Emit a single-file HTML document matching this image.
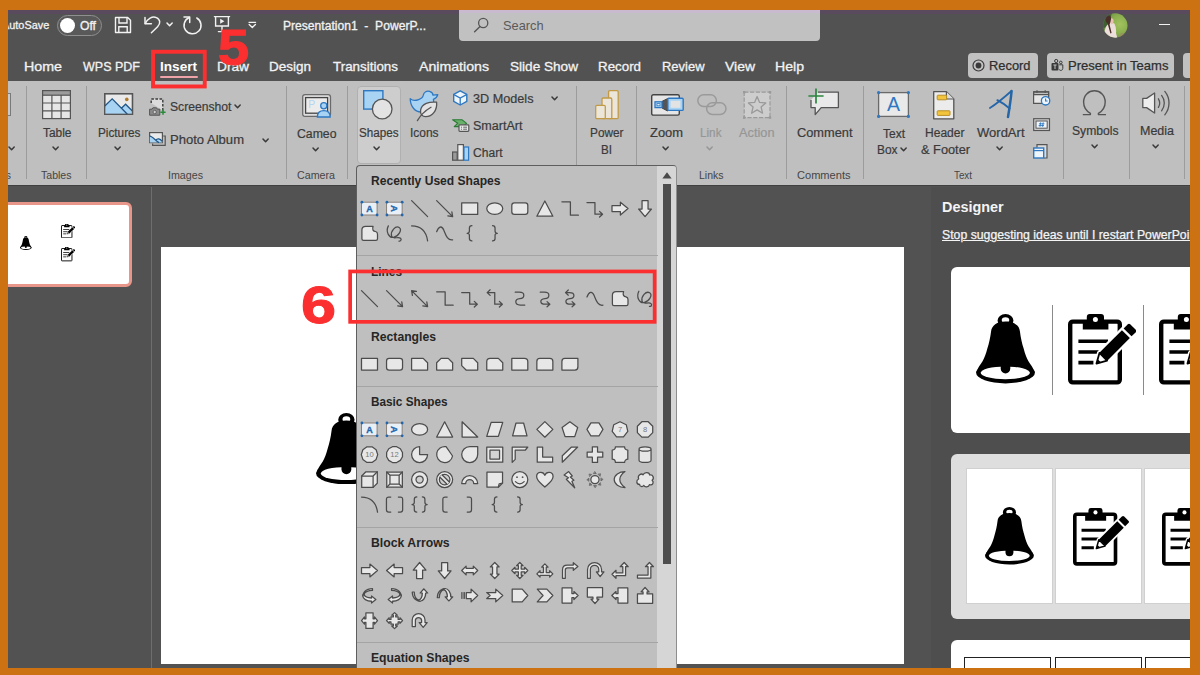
<!DOCTYPE html>
<html lang="en"><head><meta charset="utf-8"><title>PowerPoint - Insert Shapes</title>
<style>
html,body{margin:0;padding:0;}
body{width:1200px;height:675px;overflow:hidden;background:#cc7212;font-family:"Liberation Sans",sans-serif;}
#app{position:absolute;left:0;top:0;width:1200px;height:675px;overflow:hidden;background:#cc7212;}
#win{position:absolute;left:8px;top:10px;width:1182px;height:657.5px;overflow:hidden;background:#525252;}
#win>div,#win>span,#win>svg,#win div,#win span,#win svg{position:absolute;}
#win span{white-space:pre;}
#win svg{overflow:visible;}
#off{position:absolute;left:-8px;top:-10px;width:1200px;height:675px;}
</style></head><body><div id="app"><div id="win"><div id="off">
<!-- sec_title -->
<div style="left:8px;top:10px;width:1182px;height:71px;background:#525252;"></div>
<div style="left:8px;top:10px;width:1182px;height:3.7px;background:#594b5d;"></div>
<span style="left:2.10px;top:18.08px;font-size:11.5px;line-height:15.5px;color:#f2f2f2;letter-spacing:0.000px;transform:scaleX(0.9464);transform-origin:0 50%;-webkit-text-stroke:0.3px #f2f2f2;">AutoSave</span>
<div style="left:56.5px;top:15px;width:45.5px;height:20.5px;background:#595959;border:1px solid #8f8f8f;border-radius:11px;box-sizing:border-box;"></div>
<div style="left:59.5px;top:17.5px;width:15px;height:15px;background:#fff;border-radius:50%;"></div>
<span style="left:79.50px;top:17.84px;font-size:12px;line-height:16px;color:#f2f2f2;letter-spacing:0.000px;transform:scaleX(1.0136);transform-origin:0 50%;-webkit-text-stroke:0.3px #f2f2f2;">Off</span>
<svg style="left:113px;top:15px;" width="20" height="20" viewBox="0 0 20 20"><path d="M2.5 2.5h12.2l2.8 2.8v12.2h-15z" fill="none" stroke="#f2f2f2" stroke-width="1.4" stroke-linejoin="round"/>
<path d="M6 2.8v5.2h8v-5.2" fill="none" stroke="#f2f2f2" stroke-width="1.4"/><path d="M5.8 17.4v-5.6h8.4v5.6" fill="none" stroke="#f2f2f2" stroke-width="1.4"/></svg>
<svg style="left:140px;top:10px;" width="26" height="28" viewBox="0 0 26 28"><path d="M5 7.6v6.2h6.4" fill="none" stroke="#f2f2f2" stroke-width="1.5" stroke-linecap="round" stroke-linejoin="round"/>
<path d="M5.3 13.5 C7.4 8.6 12.4 5.8 16.4 7.6 C20.4 9.4 20.8 13.6 17.6 16.8 L11.4 22.8" fill="none" stroke="#f2f2f2" stroke-width="1.5" stroke-linecap="round"/></svg>
<svg style="left:164.8px;top:20.85px;" width="9.2" height="6.7" viewBox="0 0 9.2 6.7"><path d="M2 2 L4.6 4.7 L7.2 2" fill="none" stroke="#f2f2f2" stroke-width="1.5" stroke-linecap="round" stroke-linejoin="round"/></svg>
<svg style="left:180px;top:10px;" width="26" height="28" viewBox="0 0 26 28"><path d="M4 7 H9.7 V12.5" fill="none" stroke="#f2f2f2" stroke-width="1.5" stroke-linecap="round" stroke-linejoin="round"/>
<path d="M16.8 8 A8.5 8.5 0 1 1 9.3 7.5" fill="none" stroke="#f2f2f2" stroke-width="1.5" stroke-linecap="round"/></svg>
<svg style="left:212px;top:14px;" width="20" height="20" viewBox="0 0 20 20"><path d="M2.4 2.6h15.2M3.6 2.6v9.4h12.8v-9.4M10 12v5.4M6.4 17.6h7.2" fill="none" stroke="#f2f2f2" stroke-width="1.4" stroke-linecap="round"/>
<path d="M8.2 4.8l4.2 2.5-4.2 2.5z" fill="#f2f2f2"/></svg>
<svg style="left:246px;top:18px;" width="12" height="12" viewBox="0 0 12 12"><path d="M3 4.3h6.6" stroke="#f2f2f2" stroke-width="1.3" stroke-linecap="round"/><path d="M3.2 6.6l3.1 2.9 3.1-2.9" fill="none" stroke="#f2f2f2" stroke-width="1.4" stroke-linecap="round" stroke-linejoin="round"/></svg>
<span style="left:282.50px;top:17.84px;font-size:12px;line-height:16px;color:#f2f2f2;letter-spacing:0.000px;transform:scaleX(1.0081);transform-origin:0 50%;-webkit-text-stroke:0.3px #f2f2f2;">Presentation1  -  PowerP...</span>
<div style="left:459.4px;top:10px;width:360.4px;height:31px;background:#c1c1c1;border-radius:0 0 4px 4px;border-top:3.4px solid #c9bad0;box-sizing:border-box;"></div>
<svg style="left:472px;top:15px;" width="20" height="20" viewBox="0 0 20 20"><circle cx="11.2" cy="8" r="4.6" fill="none" stroke="#555" stroke-width="1.3"/><path d="M8 11.4L2.6 16.8" stroke="#555" stroke-width="1.4" stroke-linecap="round"/></svg>
<span style="left:502.50px;top:17.15px;font-size:13px;line-height:17px;color:#5a5a5a;letter-spacing:0.000px;transform:scaleX(0.9832);transform-origin:0 50%;">Search</span>
<svg style="left:1103px;top:13px;" width="24.6" height="25" viewBox="0 0 24.6 25"><defs><clipPath id="av"><circle cx="12.3" cy="12.5" r="12.2"/></clipPath><radialGradient id="avg" cx="0.68" cy="0.45" r="0.6"><stop offset="0" stop-color="#a3c25e"/><stop offset="0.6" stop-color="#8aae4e"/><stop offset="1" stop-color="#6f8f48"/></radialGradient></defs>
<g clip-path="url(#av)"><rect width="25" height="25" fill="url(#avg)"/><path d="M0 0 H9 L5 12 L0 16Z" fill="#3f6030"/>
<path d="M-1 26 L2.5 15 Q4.6 10.4 8.4 9.6 L11.4 10.6 Q13.6 15 13 20 L14.6 26Z" fill="#ecdfdb"/>
<path d="M7.6 5.4 Q10.8 5 10.6 8.6 Q10.4 11 8.6 11.4 L6.6 9.6Z" fill="#e6c3b3"/>
<path d="M2.4 6.2 Q2.6 2.4 6 2.6 Q8.4 3 8 6.2 Q7.4 9.6 6.6 11.6 L8.6 20 L7.4 20.4 L4.6 10.6 Q2.6 9.6 2.4 6.2Z" fill="#4a2f28"/>
<path d="M18 20 Q21 19 22 22 L20 25 L16 25Z" fill="#a08a68" opacity="0.7"/></g></svg>
<div style="left:1159px;top:23.5px;width:11px;height:1.5px;background:#f2f2f2;"></div>
<span style="left:24.00px;top:58.40px;font-size:13px;line-height:17px;color:#f2f2f2;letter-spacing:0.000px;transform:scaleX(1.0957);transform-origin:0 50%;-webkit-text-stroke:0.3px #f2f2f2;">Home</span>
<span style="left:82.50px;top:58.40px;font-size:13px;line-height:17px;color:#f2f2f2;letter-spacing:0.000px;transform:scaleX(0.9624);transform-origin:0 50%;-webkit-text-stroke:0.3px #f2f2f2;">WPS PDF</span>
<span style="left:216.50px;top:58.40px;font-size:13px;line-height:17px;color:#f2f2f2;letter-spacing:-0.000px;transform:scaleX(1.0548);transform-origin:0 50%;-webkit-text-stroke:0.3px #f2f2f2;">Draw</span>
<span style="left:268.50px;top:58.40px;font-size:13px;line-height:17px;color:#f2f2f2;letter-spacing:0.000px;transform:scaleX(1.0378);transform-origin:0 50%;-webkit-text-stroke:0.3px #f2f2f2;">Design</span>
<span style="left:332.50px;top:58.40px;font-size:13px;line-height:17px;color:#f2f2f2;letter-spacing:-0.000px;transform:scaleX(1.0301);transform-origin:0 50%;-webkit-text-stroke:0.3px #f2f2f2;">Transitions</span>
<span style="left:418.50px;top:58.40px;font-size:13px;line-height:17px;color:#f2f2f2;letter-spacing:0.000px;transform:scaleX(1.0884);transform-origin:0 50%;-webkit-text-stroke:0.3px #f2f2f2;">Animations</span>
<span style="left:509.50px;top:58.40px;font-size:13px;line-height:17px;color:#f2f2f2;letter-spacing:0.000px;transform:scaleX(1.0455);transform-origin:0 50%;-webkit-text-stroke:0.3px #f2f2f2;">Slide Show</span>
<span style="left:598.00px;top:58.40px;font-size:13px;line-height:17px;color:#f2f2f2;letter-spacing:-0.000px;transform:scaleX(1.0260);transform-origin:0 50%;-webkit-text-stroke:0.3px #f2f2f2;">Record</span>
<span style="left:661.50px;top:58.40px;font-size:13px;line-height:17px;color:#f2f2f2;letter-spacing:0.000px;transform:scaleX(0.9970);transform-origin:0 50%;-webkit-text-stroke:0.3px #f2f2f2;">Review</span>
<span style="left:724.50px;top:58.40px;font-size:13px;line-height:17px;color:#f2f2f2;letter-spacing:0.000px;transform:scaleX(1.0735);transform-origin:0 50%;-webkit-text-stroke:0.3px #f2f2f2;">View</span>
<span style="left:774.50px;top:58.40px;font-size:13px;line-height:17px;color:#f2f2f2;letter-spacing:0.000px;transform:scaleX(1.0846);transform-origin:0 50%;-webkit-text-stroke:0.3px #f2f2f2;">Help</span>
<span style="left:159.80px;top:58.40px;font-size:13px;line-height:17px;color:#ffffff;letter-spacing:0.000px;transform:scaleX(1.0480);transform-origin:0 50%;font-weight:700;">Insert</span>
<div style="left:160.2px;top:75.7px;width:37.4px;height:2.1px;background:#eea3a8;border-radius:1px;"></div>
<div style="left:968px;top:53px;width:69.6px;height:24.6px;background:#c1c1c1;border-radius:4px;"></div>
<svg style="left:972px;top:59px;" width="13" height="13" viewBox="0 0 13 13"><circle cx="6.5" cy="6.5" r="5.5" fill="none" stroke="#3a3a3a" stroke-width="1.2"/><circle cx="6.5" cy="6.5" r="2.9" fill="#3a3a3a"/></svg>
<span style="left:989.00px;top:57.15px;font-size:13px;line-height:17px;color:#2e2e2e;letter-spacing:0.000px;transform:scaleX(0.9902);transform-origin:0 50%;-webkit-text-stroke:0.25px #2e2e2e;">Record</span>
<div style="left:1047px;top:53px;width:127px;height:24.6px;background:#c1c1c1;border-radius:4px;"></div>
<svg style="left:1050px;top:58px;" width="15" height="15" viewBox="0 0 15 15"><rect x="1.5" y="5" width="7" height="7.5" rx="1" fill="#3a3a3a"/><path d="M3.4 7h3.2M5 7v4" stroke="#c1c1c1" stroke-width="1"/><circle cx="6.2" cy="3" r="1.6" fill="none" stroke="#3a3a3a" stroke-width="1"/><circle cx="10.8" cy="4.4" r="1.3" fill="none" stroke="#3a3a3a" stroke-width="1"/><path d="M9.2 6.8h3.6v3.6a2 2 0 0 1-3.6 1.2" fill="none" stroke="#3a3a3a" stroke-width="1"/></svg>
<span style="left:1068.00px;top:57.15px;font-size:13px;line-height:17px;color:#2e2e2e;letter-spacing:0.000px;transform:scaleX(1.0030);transform-origin:0 50%;-webkit-text-stroke:0.25px #2e2e2e;">Present in Teams</span>
<div style="left:1183px;top:53px;width:20px;height:24.6px;background:#c1c1c1;border-radius:4px;"></div>
<!-- sec_ribbon -->
<div style="left:8px;top:81px;width:1182px;height:103.5px;background:#bfbfbf;"></div>
<div style="left:8px;top:184.8px;width:1182px;height:1.7px;background:#404040;"></div>
<div style="left:357px;top:86px;width:43.5px;height:78px;background:#cdcdcd;border:1px solid #b0b0b0;border-radius:4px;box-sizing:border-box;"></div>
<div style="left:26px;top:86px;width:1px;height:93px;background:#9c9c9c;"></div>
<div style="left:86px;top:86px;width:1px;height:93px;background:#9c9c9c;"></div>
<div style="left:285.5px;top:86px;width:1px;height:93px;background:#9c9c9c;"></div>
<div style="left:346.5px;top:86px;width:1px;height:93px;background:#9c9c9c;"></div>
<div style="left:576px;top:86px;width:1px;height:93px;background:#9c9c9c;"></div>
<div style="left:635.5px;top:86px;width:1px;height:93px;background:#9c9c9c;"></div>
<div style="left:786px;top:86px;width:1px;height:93px;background:#9c9c9c;"></div>
<div style="left:862.5px;top:86px;width:1px;height:93px;background:#9c9c9c;"></div>
<div style="left:1062.5px;top:86px;width:1px;height:93px;background:#9c9c9c;"></div>
<div style="left:1128.5px;top:86px;width:1px;height:93px;background:#9c9c9c;"></div>
<div style="left:1184px;top:86px;width:1px;height:93px;background:#9c9c9c;"></div>
<div style="left:6px;top:93.2px;width:4.8px;height:22.6px;background:#c9c9c9;border:1px solid #7a7a7a;box-sizing:border-box;"></div>
<svg style="left:6.9px;top:145.05px;" width="9.2" height="6.7" viewBox="0 0 9.2 6.7"><path d="M2 2 L4.6 4.7 L7.2 2" fill="none" stroke="#3a3a3a" stroke-width="1.5" stroke-linecap="round" stroke-linejoin="round"/></svg>
<span style="left:5.50px;top:167.63px;font-size:11px;line-height:15px;color:#444;letter-spacing:0.000px;transform:scaleX(1.0000);transform-origin:0 50%;">s</span>
<span style="left:40.50px;top:167.83px;font-size:11px;line-height:15px;color:#454545;letter-spacing:0.000px;transform:scaleX(0.9593);transform-origin:0 50%;">Tables</span>
<span style="left:167.50px;top:167.83px;font-size:11px;line-height:15px;color:#454545;letter-spacing:0.000px;transform:scaleX(0.9703);transform-origin:0 50%;">Images</span>
<span style="left:297.00px;top:167.83px;font-size:11px;line-height:15px;color:#454545;letter-spacing:0.000px;transform:scaleX(0.9713);transform-origin:0 50%;">Camera</span>
<span style="left:698.50px;top:167.83px;font-size:11px;line-height:15px;color:#454545;letter-spacing:0.000px;transform:scaleX(0.9541);transform-origin:0 50%;">Links</span>
<span style="left:797.00px;top:167.83px;font-size:11px;line-height:15px;color:#454545;letter-spacing:0.000px;transform:scaleX(1.0060);transform-origin:0 50%;">Comments</span>
<span style="left:953.50px;top:167.83px;font-size:11px;line-height:15px;color:#454545;letter-spacing:0.000px;transform:scaleX(0.8922);transform-origin:0 50%;">Text</span>
<span style="left:42.50px;top:124.64px;font-size:12px;line-height:16px;color:#3a3a3a;letter-spacing:0.000px;transform:scaleX(0.9935);transform-origin:0 50%;-webkit-text-stroke:0.2px #3a3a3a;">Table</span>
<span style="left:97.50px;top:124.64px;font-size:12px;line-height:16px;color:#3a3a3a;letter-spacing:0.000px;transform:scaleX(0.9804);transform-origin:0 50%;-webkit-text-stroke:0.2px #3a3a3a;">Pictures</span>
<span style="left:296.50px;top:125.64px;font-size:12px;line-height:16px;color:#3a3a3a;letter-spacing:0.000px;transform:scaleX(1.0211);transform-origin:0 50%;-webkit-text-stroke:0.2px #3a3a3a;">Cameo</span>
<span style="left:358.50px;top:125.14px;font-size:12px;line-height:16px;color:#3a3a3a;letter-spacing:0.000px;transform:scaleX(0.9705);transform-origin:0 50%;-webkit-text-stroke:0.2px #3a3a3a;">Shapes</span>
<span style="left:410.00px;top:125.14px;font-size:12px;line-height:16px;color:#3a3a3a;letter-spacing:0.000px;transform:scaleX(0.9937);transform-origin:0 50%;-webkit-text-stroke:0.2px #3a3a3a;">Icons</span>
<span style="left:589.50px;top:125.14px;font-size:12px;line-height:16px;color:#3a3a3a;letter-spacing:0.000px;transform:scaleX(0.9849);transform-origin:0 50%;-webkit-text-stroke:0.2px #3a3a3a;">Power</span>
<span style="left:600.50px;top:141.64px;font-size:12px;line-height:16px;color:#3a3a3a;letter-spacing:0.000px;transform:scaleX(0.9702);transform-origin:0 50%;-webkit-text-stroke:0.2px #3a3a3a;">BI</span>
<span style="left:649.50px;top:125.14px;font-size:12px;line-height:16px;color:#3a3a3a;letter-spacing:0.000px;transform:scaleX(1.0758);transform-origin:0 50%;-webkit-text-stroke:0.2px #3a3a3a;">Zoom</span>
<span style="left:700.00px;top:125.14px;font-size:12px;line-height:16px;color:#969696;letter-spacing:0.000px;transform:scaleX(0.9767);transform-origin:0 50%;-webkit-text-stroke:0.2px #969696;">Link</span>
<span style="left:739.00px;top:125.14px;font-size:12px;line-height:16px;color:#969696;letter-spacing:0.000px;transform:scaleX(1.0644);transform-origin:0 50%;-webkit-text-stroke:0.2px #969696;">Action</span>
<span style="left:797.00px;top:125.14px;font-size:12px;line-height:16px;color:#3a3a3a;letter-spacing:0.000px;transform:scaleX(1.0670);transform-origin:0 50%;-webkit-text-stroke:0.2px #3a3a3a;">Comment</span>
<span style="left:882.50px;top:125.64px;font-size:12px;line-height:16px;color:#3a3a3a;letter-spacing:0.000px;transform:scaleX(0.9996);transform-origin:0 50%;-webkit-text-stroke:0.2px #3a3a3a;">Text</span>
<span style="left:877.00px;top:141.64px;font-size:12px;line-height:16px;color:#3a3a3a;letter-spacing:0.000px;transform:scaleX(0.9914);transform-origin:0 50%;-webkit-text-stroke:0.2px #3a3a3a;">Box</span>
<span style="left:925.00px;top:124.64px;font-size:12px;line-height:16px;color:#3a3a3a;letter-spacing:0.000px;transform:scaleX(1.0036);transform-origin:0 50%;-webkit-text-stroke:0.2px #3a3a3a;">Header</span>
<span style="left:920.50px;top:141.64px;font-size:12px;line-height:16px;color:#3a3a3a;letter-spacing:0.000px;transform:scaleX(1.0648);transform-origin:0 50%;-webkit-text-stroke:0.2px #3a3a3a;">&amp; Footer</span>
<span style="left:977.00px;top:124.64px;font-size:12px;line-height:16px;color:#3a3a3a;letter-spacing:0.000px;transform:scaleX(1.0848);transform-origin:0 50%;-webkit-text-stroke:0.2px #3a3a3a;">WordArt</span>
<span style="left:1072.00px;top:123.14px;font-size:12px;line-height:16px;color:#3a3a3a;letter-spacing:0.000px;transform:scaleX(1.0106);transform-origin:0 50%;-webkit-text-stroke:0.2px #3a3a3a;">Symbols</span>
<span style="left:1139.50px;top:123.14px;font-size:12px;line-height:16px;color:#3a3a3a;letter-spacing:0.000px;transform:scaleX(1.0403);transform-origin:0 50%;-webkit-text-stroke:0.2px #3a3a3a;">Media</span>
<span style="left:169.50px;top:98.64px;font-size:12px;line-height:16px;color:#3a3a3a;letter-spacing:0.000px;transform:scaleX(1.0131);transform-origin:0 50%;-webkit-text-stroke:0.2px #3a3a3a;">Screenshot</span>
<span style="left:169.50px;top:132.14px;font-size:12px;line-height:16px;color:#3a3a3a;letter-spacing:0.000px;transform:scaleX(1.0875);transform-origin:0 50%;-webkit-text-stroke:0.2px #3a3a3a;">Photo Album</span>
<span style="left:473.00px;top:90.64px;font-size:12px;line-height:16px;color:#3a3a3a;letter-spacing:0.000px;transform:scaleX(1.0548);transform-origin:0 50%;-webkit-text-stroke:0.2px #3a3a3a;">3D Models</span>
<span style="left:473.00px;top:118.14px;font-size:12px;line-height:16px;color:#3a3a3a;letter-spacing:0.000px;transform:scaleX(1.0457);transform-origin:0 50%;-webkit-text-stroke:0.2px #3a3a3a;">SmartArt</span>
<span style="left:473.00px;top:145.14px;font-size:12px;line-height:16px;color:#3a3a3a;letter-spacing:0.000px;transform:scaleX(1.0053);transform-origin:0 50%;-webkit-text-stroke:0.2px #3a3a3a;">Chart</span>
<svg style="left:51.4px;top:144.65px;" width="9.2" height="6.7" viewBox="0 0 9.2 6.7"><path d="M2 2 L4.6 4.7 L7.2 2" fill="none" stroke="#3a3a3a" stroke-width="1.5" stroke-linecap="round" stroke-linejoin="round"/></svg>
<svg style="left:113.4px;top:144.65px;" width="9.2" height="6.7" viewBox="0 0 9.2 6.7"><path d="M2 2 L4.6 4.7 L7.2 2" fill="none" stroke="#3a3a3a" stroke-width="1.5" stroke-linecap="round" stroke-linejoin="round"/></svg>
<svg style="left:232.9px;top:103.15px;" width="9.2" height="6.7" viewBox="0 0 9.2 6.7"><path d="M2 2 L4.6 4.7 L7.2 2" fill="none" stroke="#3a3a3a" stroke-width="1.5" stroke-linecap="round" stroke-linejoin="round"/></svg>
<svg style="left:260.9px;top:137.15px;" width="9.2" height="6.7" viewBox="0 0 9.2 6.7"><path d="M2 2 L4.6 4.7 L7.2 2" fill="none" stroke="#3a3a3a" stroke-width="1.5" stroke-linecap="round" stroke-linejoin="round"/></svg>
<svg style="left:311.4px;top:146.15px;" width="9.2" height="6.7" viewBox="0 0 9.2 6.7"><path d="M2 2 L4.6 4.7 L7.2 2" fill="none" stroke="#3a3a3a" stroke-width="1.5" stroke-linecap="round" stroke-linejoin="round"/></svg>
<svg style="left:372.4px;top:145.15px;" width="9.2" height="6.7" viewBox="0 0 9.2 6.7"><path d="M2 2 L4.6 4.7 L7.2 2" fill="none" stroke="#3a3a3a" stroke-width="1.5" stroke-linecap="round" stroke-linejoin="round"/></svg>
<svg style="left:550.4px;top:95.15px;" width="9.2" height="6.7" viewBox="0 0 9.2 6.7"><path d="M2 2 L4.6 4.7 L7.2 2" fill="none" stroke="#3a3a3a" stroke-width="1.5" stroke-linecap="round" stroke-linejoin="round"/></svg>
<svg style="left:660.9px;top:145.15px;" width="9.2" height="6.7" viewBox="0 0 9.2 6.7"><path d="M2 2 L4.6 4.7 L7.2 2" fill="none" stroke="#3a3a3a" stroke-width="1.5" stroke-linecap="round" stroke-linejoin="round"/></svg>
<svg style="left:705.4px;top:145.15px;" width="9.2" height="6.7" viewBox="0 0 9.2 6.7"><path d="M2 2 L4.6 4.7 L7.2 2" fill="none" stroke="#969696" stroke-width="1.5" stroke-linecap="round" stroke-linejoin="round"/></svg>
<svg style="left:899.4px;top:146.45px;" width="9.2" height="6.7" viewBox="0 0 9.2 6.7"><path d="M2 2 L4.6 4.7 L7.2 2" fill="none" stroke="#3a3a3a" stroke-width="1.5" stroke-linecap="round" stroke-linejoin="round"/></svg>
<svg style="left:995.4px;top:144.65px;" width="9.2" height="6.7" viewBox="0 0 9.2 6.7"><path d="M2 2 L4.6 4.7 L7.2 2" fill="none" stroke="#3a3a3a" stroke-width="1.5" stroke-linecap="round" stroke-linejoin="round"/></svg>
<svg style="left:1089.9px;top:143.15px;" width="9.2" height="6.7" viewBox="0 0 9.2 6.7"><path d="M2 2 L4.6 4.7 L7.2 2" fill="none" stroke="#3a3a3a" stroke-width="1.5" stroke-linecap="round" stroke-linejoin="round"/></svg>
<svg style="left:1151.4px;top:143.15px;" width="9.2" height="6.7" viewBox="0 0 9.2 6.7"><path d="M2 2 L4.6 4.7 L7.2 2" fill="none" stroke="#3a3a3a" stroke-width="1.5" stroke-linecap="round" stroke-linejoin="round"/></svg>
<svg style="left:42px;top:90.3px;" width="29" height="29.2" viewBox="0 0 29 29.2"><rect x="0.6" y="0.6" width="27.8" height="28" fill="#e6e6e6" stroke="#555" stroke-width="1.2"/><rect x="0.6" y="0.6" width="27.8" height="4.6" fill="#9c9c9c" stroke="#555" stroke-width="1.2"/><path d="M9.9 5v23.6M19.1 5v23.6M0.6 13h27.8M0.6 20.8h27.8" stroke="#555" stroke-width="1.2" fill="none"/></svg>
<svg style="left:104px;top:93.4px;" width="29.2" height="22" viewBox="0 0 29.2 22"><rect x="0.7" y="0.7" width="27.8" height="20.6" fill="#e9e9e9" stroke="#555" stroke-width="1.3"/><path d="M0.8 13 L8.2 5.8 L18.8 17.2 L23 21.2 H0.8Z" fill="#a9d3f3" stroke="none"/><path d="M17.2 15.4 L21.6 11.2 L28.4 18 V21.2 H23Z" fill="#a9d3f3" stroke="none"/><path d="M0.8 13 L8.2 5.8 L23.4 21.2 M17.4 15.2 L21.6 11.2 L28.4 18" fill="none" stroke="#1f5688" stroke-width="1.3"/><circle cx="22.8" cy="6.4" r="1.8" fill="#b07a2c"/><rect x="0.7" y="0.7" width="27.8" height="20.6" fill="none" stroke="#555" stroke-width="1.3"/></svg>
<svg style="left:149px;top:97.5px;" width="17" height="18" viewBox="0 0 17 18"><path d="M2.2 5V1h11.6v11.4" fill="#dcdcdc" stroke="#3c3c3c" stroke-width="1.4" stroke-dasharray="2.6 1.5"/><path d="M0.6 11.2h2.4l0.9-1.4h3.6l0.9 1.4h2.4v6H0.6z" fill="#8a8a8a" stroke="#555" stroke-width="1"/><circle cx="5.7" cy="14" r="1.7" fill="#cfcfcf" stroke="#555" stroke-width="0.8"/><path d="M14 11.6v5.2M11.4 14.2h5.2" stroke="#2a8a3a" stroke-width="1.5"/></svg>
<svg style="left:149px;top:132px;" width="17" height="14" viewBox="0 0 17 14"><path d="M3.6 11.4v2h12.6V4h-2" fill="none" stroke="#555" stroke-width="1.2"/><rect x="0.6" y="0.6" width="12.8" height="10" fill="#eaeaea" stroke="#555" stroke-width="1.2"/><path d="M0.8 4.4 C3 4.6 5.6 7.6 8 10.4 H0.8Z M6.6 8.6 C8.4 6.4 10.6 6.4 13.2 9 V10.4 H8Z" fill="#a9d3f3"/><path d="M0.8 4.2 C3.4 4.4 6.4 8.4 10 10.6 M6.4 8.4 C8.6 6 11 6.6 13.2 9.4" fill="none" stroke="#1f5688" stroke-width="1.3"/></svg>
<svg style="left:302.3px;top:93.5px;" width="29.4" height="23.6" viewBox="0 0 29.4 23.6"><rect x="0.7" y="0.7" width="27.8" height="21.6" rx="2.4" fill="#dedede" stroke="#6a6a6a" stroke-width="1.3"/><rect x="3.6" y="3.6" width="22" height="15.6" fill="#ececec" stroke="#444" stroke-width="1.3"/><text x="6.2" y="13.6" font-size="10.5" fill="#b5d5f0" font-family="Liberation Sans,sans-serif">P</text><path d="M15.4 23 C15.4 18.4 18 16.6 21.8 16.6 C25.6 16.6 28.2 18.4 28.2 23Z" fill="#a9d3f3" stroke="#2e78c2" stroke-width="1.3"/><circle cx="21.8" cy="11.8" r="3.1" fill="#a9d3f3" stroke="#2e78c2" stroke-width="1.3"/></svg>
<svg style="left:363px;top:90.3px;" width="30" height="30" viewBox="0 0 30 30"><rect x="0.7" y="0.7" width="19.2" height="18.4" fill="#a9d3f3" stroke="#2e78c2" stroke-width="1.4"/><circle cx="19.2" cy="19" r="9.8" fill="#e3e3e3" stroke="#555" stroke-width="1.3"/></svg>
<svg style="left:409.4px;top:89.6px;" width="30" height="32" viewBox="0 0 30 32"><path d="M1.2 8.6 C3 10.4 6.6 10.8 9.6 9.6 C12.6 8.6 13.8 7.4 14.2 5.4 C14.8 1.8 18 0.6 20.6 1.4 C23 2.2 24 4 24 5.2 L28.8 4.6 C28 7.4 26.4 8.6 24.4 9.4 C25.4 13.6 24.6 17.6 21.4 20.4 L13 22 C6.4 22.6 1.2 16.6 1.2 8.6Z" fill="#a9d3f3" stroke="#2e78c2" stroke-width="1.3" stroke-linejoin="round"/><path d="M27.6 12.2 C20.4 11.4 12.6 13.6 11.6 20.2 C11 24 13.4 26.6 16.6 26.6 C23.6 26.6 28.4 20 27.6 12.2Z" fill="#e3e3e3" stroke="#555" stroke-width="1.3" stroke-linejoin="round"/><path d="M8.4 30.6 C11.6 25 16.4 20.4 22 17.2" fill="none" stroke="#555" stroke-width="1.3" stroke-linecap="round"/></svg>
<svg style="left:453px;top:90px;" width="14.6" height="15.8" viewBox="0 0 14.6 15.8"><path d="M7.2 0.8 L13.8 4.4 V11.4 L7.2 15 L0.7 11.4 V4.4Z" fill="#eef5fb" stroke="#2e78c2" stroke-width="1.4" stroke-linejoin="round"/><path d="M0.9 4.6 L7.2 8 L13.6 4.6 M7.2 8 V14.8" fill="none" stroke="#2e78c2" stroke-width="1.3"/></svg>
<svg style="left:452.4px;top:118.6px;" width="17.4" height="13" viewBox="0 0 17.4 13"><path d="M0.6 0.8 H10.2 L14.6 4.4 L10.6 7.6 H2.2 L5.8 4.2Z" fill="#6ab06a" stroke="#2a7a36" stroke-width="1.1" stroke-linejoin="round"/><rect x="7" y="5.8" width="9.8" height="6.6" rx="0.8" fill="#e8e8e8" stroke="#555" stroke-width="1.2"/><path d="M9 8.2h1M11.2 8.2h3.8M9 10.2h1M11.2 10.2h3.8" stroke="#555" stroke-width="0.9"/></svg>
<svg style="left:452px;top:144.2px;" width="17.4" height="17" viewBox="0 0 17.4 17"><rect x="0.6" y="8" width="4.6" height="8.2" fill="#9a9a9a" stroke="#555" stroke-width="1.2"/><rect x="5.8" y="0.6" width="5.6" height="15.6" fill="#f2f2f2" stroke="#555" stroke-width="1.2"/><rect x="12" y="3" width="4.6" height="13.2" fill="#a9d3f3" stroke="#2e78c2" stroke-width="1.2"/></svg>
<svg style="left:594.6px;top:90px;" width="24.2" height="29.6" viewBox="0 0 24.2 29.6"><rect x="13.6" y="0.7" width="9.6" height="28" rx="1.2" fill="#ece6da" stroke="#c29a45" stroke-width="1.3"/><rect x="7" y="8" width="9.8" height="20.7" rx="1.2" fill="#ece6da" stroke="#c29a45" stroke-width="1.3"/><rect x="0.7" y="15.4" width="9.6" height="13.3" rx="1.2" fill="#ece6da" stroke="#c29a45" stroke-width="1.3"/></svg>
<svg style="left:650.6px;top:93.5px;" width="33" height="22" viewBox="0 0 33 22"><rect x="0.7" y="0.7" width="27.6" height="20.4" rx="1.6" fill="#e6e6e6" stroke="#444" stroke-width="1.4"/><path d="M11 7.4 L16.6 4.6 V17 L11 14Z" fill="#555" stroke="#444" stroke-width="1"/><rect x="4" y="7.8" width="7" height="5.8" fill="#a9d3f3" stroke="#2e78c2" stroke-width="1.3"/><rect x="6" y="9.6" width="3" height="2.2" fill="#e8f2fb" stroke="#2e78c2" stroke-width="0.8"/><rect x="16.8" y="4.2" width="15.4" height="12.2" rx="1" fill="#a9d3f3" stroke="#2e78c2" stroke-width="1.4"/><rect x="19.6" y="6.8" width="9.8" height="7" fill="#e3e3e3" stroke="none"/></svg>
<svg style="left:696.5px;top:94px;" width="30" height="21.4" viewBox="0 0 30 21.4"><rect x="0.8" y="0.8" width="18.6" height="11.6" rx="5.8" fill="none" stroke="#9a9a9a" stroke-width="1.5"/><rect x="9.6" y="8.8" width="19.4" height="11.6" rx="5.8" fill="none" stroke="#9a9a9a" stroke-width="1.5"/></svg>
<svg style="left:742.7px;top:91px;" width="28.4" height="28" viewBox="0 0 28.4 28"><rect x="1.2" y="1.2" width="25.8" height="25.4" fill="#cdcdcd" stroke="#9a9a9a" stroke-width="1.2" stroke-dasharray="4.2 1.6"/><rect x="0" y="0" width="2.4" height="2.4" fill="#9a9a9a"/><rect x="0" y="25.4" width="2.4" height="2.4" fill="#9a9a9a"/><rect x="25.8" y="0" width="2.4" height="2.4" fill="#9a9a9a"/><rect x="25.8" y="25.4" width="2.4" height="2.4" fill="#9a9a9a"/><path d="M14.1 5.6 L16.6 11.4 L22.8 11.9 L18.1 16 L19.6 22.2 L14.1 18.9 L8.6 22.2 L10.1 16 L5.4 11.9 L11.6 11.4Z" fill="none" stroke="#9a9a9a" stroke-width="1.3" stroke-linejoin="round"/></svg>
<svg style="left:808.2px;top:88.4px;" width="32" height="28" viewBox="0 0 32 28"><path d="M10 4.2 H30.4 V19.6 H13.2 L7.2 26.6 V19.6 H3 V12" fill="#e9e9e9" stroke="#555" stroke-width="1.3" stroke-linejoin="round"/><path d="M8 0.4 V15.6 M0.4 8 H15.6" stroke="#2e8540" stroke-width="1.7"/></svg>
<svg style="left:876.6px;top:90.6px;" width="33" height="27" viewBox="0 0 33 27"><rect x="1.6" y="1.6" width="29.8" height="23.8" fill="#e9e9e9" stroke="#6a6a6a" stroke-width="1.3"/><circle cx="1.6" cy="1.6" r="1.6" fill="#2e78c2"/><circle cx="1.6" cy="25.4" r="1.6" fill="#2e78c2"/><circle cx="31.4" cy="1.6" r="1.6" fill="#2e78c2"/><circle cx="31.4" cy="25.4" r="1.6" fill="#2e78c2"/><text x="16.5" y="20.4" font-size="19.5" text-anchor="middle" fill="#2e78c2" font-family="Liberation Sans,sans-serif">A</text></svg>
<svg style="left:933.2px;top:90.5px;" width="21.6" height="28.6" viewBox="0 0 21.6 28.6"><path d="M0.7 0.7 H13.4 L20.8 8 V27.8 H0.7Z" fill="#ececec" stroke="#555" stroke-width="1.3" stroke-linejoin="round"/><path d="M13.4 0.7 V8 H20.8" fill="#dcdcdc" stroke="#555" stroke-width="1.2" stroke-linejoin="round"/><rect x="4.2" y="4.2" width="9.4" height="4.6" rx="0.6" fill="#f2c43c" stroke="#b88f28" stroke-width="1"/><rect x="4.2" y="19.8" width="12.8" height="4.6" rx="0.6" fill="#f2c43c" stroke="#b88f28" stroke-width="1"/></svg>
<svg style="left:989.3px;top:90.3px;" width="24" height="28" viewBox="0 0 24 28"><path d="M22.6 1 C21.8 9 20.4 18.6 19 27" fill="none" stroke="#2466a8" stroke-width="2.5" stroke-linecap="round"/><path d="M22.4 1 C15 7.6 8 13.6 0.9 18" fill="none" stroke="#2466a8" stroke-width="1.7" stroke-linecap="round"/><path d="M8.4 10.2 C12.6 12.4 17 15.4 20.6 18.4" fill="none" stroke="#2466a8" stroke-width="2" stroke-linecap="round"/></svg>
<svg style="left:1033.2px;top:90.3px;" width="17.4" height="15.8" viewBox="0 0 17.4 15.8"><path d="M0.6 1.8 H15.6 V6.4 M8.6 13.4 H0.6 V1.8 M0.6 4.6 H15.6 M4 0.2 V3 M12.2 0.2 V3" fill="none" stroke="#555" stroke-width="1.2"/><rect x="0.6" y="4.6" width="15" height="8.8" fill="#e6e6e6" stroke="none"/><path d="M0.6 1.8 H15.6 V13.4 H0.6Z M0.6 4.6 H15.6" fill="none" stroke="#555" stroke-width="1.2"/><circle cx="12.6" cy="10.8" r="4.2" fill="#eef5fb" stroke="#2e78c2" stroke-width="1.3"/><path d="M12.6 8.6 V11 H14.6" fill="none" stroke="#2e78c2" stroke-width="1.1"/></svg>
<svg style="left:1033.2px;top:117.8px;" width="17.2" height="13.2" viewBox="0 0 17.2 13.2"><rect x="0.7" y="0.7" width="15.8" height="11.8" fill="#d6d6d6" stroke="#555" stroke-width="1.2"/><rect x="3" y="3" width="11.2" height="7.2" fill="#eef5fb" stroke="#555" stroke-width="1"/><path d="M7.6 4.4 L7 8.8 M10.2 4.4 L9.6 8.8 M6 5.8 H11.4 M5.6 7.6 H11" stroke="#2e78c2" stroke-width="0.9" fill="none"/></svg>
<svg style="left:1033.2px;top:144px;" width="15" height="16.4" viewBox="0 0 15 16.4"><path d="M4 3.4 V0.7 H14 V14 H11" fill="#dcdcdc" stroke="#555" stroke-width="1.2"/><rect x="0.7" y="4" width="10" height="10" fill="#eef5fb" stroke="#2e78c2" stroke-width="1.4"/><path d="M0.7 6.6 H10.7" stroke="#2e78c2" stroke-width="1.2"/></svg>
<svg style="left:1082.2px;top:90px;" width="25" height="25.6" viewBox="0 0 25 25.6"><path d="M0.8 24.6 H8.4 V23.4 C3.6 20.6 1.6 16.4 1.6 12 C1.6 5.4 6.4 0.8 12.4 0.8 C18.4 0.8 23.2 5.4 23.2 12 C23.2 16.4 21.2 20.6 16.4 23.4 V24.6 H24" fill="none" stroke="#555" stroke-width="1.4" stroke-linejoin="round"/></svg>
<svg style="left:1142.4px;top:89.8px;" width="28" height="26" viewBox="0 0 28 26"><path d="M0.8 8.4 H4.6 L12.6 3 V23 L4.6 17.6 H0.8Z" fill="#ededed" stroke="#555" stroke-width="1.3" stroke-linejoin="round"/><path d="M16.4 8.8 C18 11.4 18 14.8 16.4 17.4 M19.6 5.4 C23.2 10 23.2 16.2 19.6 20.8 M22.8 1.4 C28.4 8 28.4 18.2 22.8 24.8" fill="none" stroke="#555" stroke-width="1.3" stroke-linecap="round"/></svg>
<!-- sec_main -->
<div style="left:150.5px;top:187px;width:1px;height:481px;background:#6e6e6e;"></div>
<div style="left:-4px;top:202px;width:136px;height:85px;background:#fff;border:3px solid #e9968a;border-radius:6px;box-sizing:border-box;"></div>
<div style="left:161px;top:247px;width:743px;height:417px;background:#fff;"></div>
<svg style="left:316.4px;top:412.6px;overflow:hidden" width="61.4" height="71.8" viewBox="0 0 60 70" preserveAspectRatio="none"><path d="M29.7,7.4 C21,7.4 15.8,11.4 15.2,17.4 C14.4,24 13,30 11.5,34.4 C10,40 8.6,44 6.6,47.4 C4.6,50.6 1.6,54 0.3,58.8 L59.1,58.8 C57.8,54 54.8,50.6 52.8,47.4 C50.8,44 49.4,40 47.9,34.4 C46.4,30 45,24 44.2,17.4 C43.6,11.4 38.4,7.4 29.7,7.4Z" fill="#000"/><path fill-rule="evenodd" d="M21.7,6.6 A8,6.6 0 1 0 37.7,6.6 A8,6.6 0 1 0 21.7,6.6Z M25.9,6.1 A3.8,2.9 0 1 1 33.5,6.1 A3.8,2.9 0 1 1 25.9,6.1Z" fill="#000"/><ellipse cx="29.7" cy="58.9" rx="29.6" ry="10.7" fill="#000"/><ellipse cx="29.5" cy="59" rx="24.8" ry="6.4" fill="#fff"/><path d="M24.9,50 H34.5 V54.8 A4.8,4.8 0 0 1 24.9,54.8Z" fill="#000"/></svg>
<svg style="left:20px;top:236px;overflow:hidden" width="11.8" height="14" viewBox="0 0 60 70" preserveAspectRatio="none"><path d="M29.7,7.4 C21,7.4 15.8,11.4 15.2,17.4 C14.4,24 13,30 11.5,34.4 C10,40 8.6,44 6.6,47.4 C4.6,50.6 1.6,54 0.3,58.8 L59.1,58.8 C57.8,54 54.8,50.6 52.8,47.4 C50.8,44 49.4,40 47.9,34.4 C46.4,30 45,24 44.2,17.4 C43.6,11.4 38.4,7.4 29.7,7.4Z" fill="#000"/><path fill-rule="evenodd" d="M21.7,6.6 A8,6.6 0 1 0 37.7,6.6 A8,6.6 0 1 0 21.7,6.6Z M25.9,6.1 A3.8,2.9 0 1 1 33.5,6.1 A3.8,2.9 0 1 1 25.9,6.1Z" fill="#000"/><ellipse cx="29.7" cy="58.9" rx="29.6" ry="10.7" fill="#000"/><ellipse cx="29.5" cy="59" rx="24.8" ry="6.4" fill="#fff"/><path d="M24.9,50 H34.5 V54.8 A4.8,4.8 0 0 1 24.9,54.8Z" fill="#000"/></svg>
<svg style="left:60.6px;top:224px;overflow:hidden" width="14.4" height="14.4" viewBox="0 0 68 71" preserveAspectRatio="none"><rect x="2.2" y="7.6" width="49.6" height="60.8" rx="2.6" fill="#fff" stroke="#000" stroke-width="4.4"/><path d="M18.8,6.4 V3 Q18.8,0 21.8,0 H33 Q36,0 36,3 V6.4 H40.4 V15.6 H14.8 V6.4Z" fill="#000"/><circle cx="27.4" cy="5.4" r="2.5" fill="#fff"/><path d="M10.4,27.2 H40 M10.4,38 H32.4 M10.4,48.6 H25.4" stroke="#000" stroke-width="3.6" fill="none"/><g transform="translate(28.2 49.8) rotate(-45)"><path d="M-2.4,0 L9,-7.8 H49.4 Q54.4,-7.8 54.4,-2.8 V2.8 Q54.4,7.8 49.4,7.8 H9Z" fill="#fff"/><path d="M0.4,0 L10,-5.4 V5.4Z" fill="#fff" stroke="#000" stroke-width="1.8" stroke-linejoin="round"/><path d="M0.4,0 L4.4,-2.2 V2.2Z" fill="#000"/><path d="M10.4,-5.6 H42 V5.6 H10.4Z" fill="#000"/><path d="M44.4,-5.6 H50 Q52,-5.6 52,-3.6 V3.6 Q52,5.6 50,5.6 H44.4Z" fill="#000"/></g></svg>
<svg style="left:60.6px;top:247.2px;overflow:hidden" width="14.4" height="14.4" viewBox="0 0 68 71" preserveAspectRatio="none"><rect x="2.2" y="7.6" width="49.6" height="60.8" rx="2.6" fill="#fff" stroke="#000" stroke-width="4.4"/><path d="M18.8,6.4 V3 Q18.8,0 21.8,0 H33 Q36,0 36,3 V6.4 H40.4 V15.6 H14.8 V6.4Z" fill="#000"/><circle cx="27.4" cy="5.4" r="2.5" fill="#fff"/><path d="M10.4,27.2 H40 M10.4,38 H32.4 M10.4,48.6 H25.4" stroke="#000" stroke-width="3.6" fill="none"/><g transform="translate(28.2 49.8) rotate(-45)"><path d="M-2.4,0 L9,-7.8 H49.4 Q54.4,-7.8 54.4,-2.8 V2.8 Q54.4,7.8 49.4,7.8 H9Z" fill="#fff"/><path d="M0.4,0 L10,-5.4 V5.4Z" fill="#fff" stroke="#000" stroke-width="1.8" stroke-linejoin="round"/><path d="M0.4,0 L4.4,-2.2 V2.2Z" fill="#000"/><path d="M10.4,-5.6 H42 V5.6 H10.4Z" fill="#000"/><path d="M44.4,-5.6 H50 Q52,-5.6 52,-3.6 V3.6 Q52,5.6 50,5.6 H44.4Z" fill="#000"/></g></svg>
<!-- sec_designer -->
<div style="left:930.5px;top:187px;width:260px;height:481px;background:#4e4e4e;"></div>
<span style="left:941.90px;top:197.96px;font-size:14px;line-height:18px;color:#f4f4f4;letter-spacing:-0.000px;transform:scaleX(1.0281);transform-origin:0 50%;font-weight:700;">Designer</span>
<span style="left:941.90px;top:227.44px;font-size:12px;line-height:16px;color:#f4f4f4;letter-spacing:0.000px;transform:scaleX(1.0218);transform-origin:0 50%;-webkit-text-stroke:0.25px #f4f4f4;text-decoration:underline;text-underline-offset:0.6px;text-decoration-thickness:1px;">Stop suggesting ideas until I restart PowerPoint</span>
<div style="left:951px;top:267px;width:245px;height:166px;background:#fff;border-radius:6px;"></div>
<div style="left:1051.8px;top:305px;width:1px;height:89.5px;background:#8a8a8a;"></div>
<div style="left:1143px;top:305px;width:1px;height:89.5px;background:#8a8a8a;"></div>
<div style="left:951px;top:453.5px;width:245px;height:165.5px;background:#dedede;border-radius:6px;"></div>
<div style="left:967px;top:469px;width:85px;height:133.5px;background:#fff;box-shadow:0 0 0 1px #d0d0d0;"></div>
<div style="left:1056px;top:469px;width:84.5px;height:133.5px;background:#fff;box-shadow:0 0 0 1px #d0d0d0;"></div>
<div style="left:1144.5px;top:469px;width:60px;height:133.5px;background:#fff;box-shadow:0 0 0 1px #d0d0d0;"></div>
<div style="left:951px;top:639.5px;width:245px;height:40px;background:#fff;border-radius:6px;"></div>
<div style="left:964px;top:656.5px;width:87px;height:30px;background:#fff;border:1.8px solid #222;box-sizing:border-box;"></div>
<div style="left:1055px;top:656.5px;width:86.5px;height:30px;background:#fff;border:1.8px solid #222;box-sizing:border-box;"></div>
<div style="left:1145px;top:656.5px;width:60px;height:30px;background:#fff;border:1.8px solid #222;box-sizing:border-box;"></div>
<svg style="left:976.2px;top:314.4px;overflow:hidden" width="59.6" height="69.8" viewBox="0 0 60 70" preserveAspectRatio="none"><path d="M29.7,7.4 C21,7.4 15.8,11.4 15.2,17.4 C14.4,24 13,30 11.5,34.4 C10,40 8.6,44 6.6,47.4 C4.6,50.6 1.6,54 0.3,58.8 L59.1,58.8 C57.8,54 54.8,50.6 52.8,47.4 C50.8,44 49.4,40 47.9,34.4 C46.4,30 45,24 44.2,17.4 C43.6,11.4 38.4,7.4 29.7,7.4Z" fill="#000"/><path fill-rule="evenodd" d="M21.7,6.6 A8,6.6 0 1 0 37.7,6.6 A8,6.6 0 1 0 21.7,6.6Z M25.9,6.1 A3.8,2.9 0 1 1 33.5,6.1 A3.8,2.9 0 1 1 25.9,6.1Z" fill="#000"/><ellipse cx="29.7" cy="58.9" rx="29.6" ry="10.7" fill="#000"/><ellipse cx="29.5" cy="59" rx="24.8" ry="6.4" fill="#fff"/><path d="M24.9,50 H34.5 V54.8 A4.8,4.8 0 0 1 24.9,54.8Z" fill="#000"/></svg>
<svg style="left:1067.6px;top:314.4px;overflow:hidden" width="68" height="71" viewBox="0 0 68 71" preserveAspectRatio="none"><rect x="2.2" y="7.6" width="49.6" height="60.8" rx="2.6" fill="#fff" stroke="#000" stroke-width="4.4"/><path d="M18.8,6.4 V3 Q18.8,0 21.8,0 H33 Q36,0 36,3 V6.4 H40.4 V15.6 H14.8 V6.4Z" fill="#000"/><circle cx="27.4" cy="5.4" r="2.5" fill="#fff"/><path d="M10.4,27.2 H40 M10.4,38 H32.4 M10.4,48.6 H25.4" stroke="#000" stroke-width="3.6" fill="none"/><g transform="translate(28.2 49.8) rotate(-45)"><path d="M-2.4,0 L9,-7.8 H49.4 Q54.4,-7.8 54.4,-2.8 V2.8 Q54.4,7.8 49.4,7.8 H9Z" fill="#fff"/><path d="M0.4,0 L10,-5.4 V5.4Z" fill="#fff" stroke="#000" stroke-width="1.8" stroke-linejoin="round"/><path d="M0.4,0 L4.4,-2.2 V2.2Z" fill="#000"/><path d="M10.4,-5.6 H42 V5.6 H10.4Z" fill="#000"/><path d="M44.4,-5.6 H50 Q52,-5.6 52,-3.6 V3.6 Q52,5.6 50,5.6 H44.4Z" fill="#000"/></g></svg>
<svg style="left:1158.8px;top:314.4px;overflow:hidden" width="68" height="71" viewBox="0 0 68 71" preserveAspectRatio="none"><rect x="2.2" y="7.6" width="49.6" height="60.8" rx="2.6" fill="#fff" stroke="#000" stroke-width="4.4"/><path d="M18.8,6.4 V3 Q18.8,0 21.8,0 H33 Q36,0 36,3 V6.4 H40.4 V15.6 H14.8 V6.4Z" fill="#000"/><circle cx="27.4" cy="5.4" r="2.5" fill="#fff"/><path d="M10.4,27.2 H40 M10.4,38 H32.4 M10.4,48.6 H25.4" stroke="#000" stroke-width="3.6" fill="none"/><g transform="translate(28.2 49.8) rotate(-45)"><path d="M-2.4,0 L9,-7.8 H49.4 Q54.4,-7.8 54.4,-2.8 V2.8 Q54.4,7.8 49.4,7.8 H9Z" fill="#fff"/><path d="M0.4,0 L10,-5.4 V5.4Z" fill="#fff" stroke="#000" stroke-width="1.8" stroke-linejoin="round"/><path d="M0.4,0 L4.4,-2.2 V2.2Z" fill="#000"/><path d="M10.4,-5.6 H42 V5.6 H10.4Z" fill="#000"/><path d="M44.4,-5.6 H50 Q52,-5.6 52,-3.6 V3.6 Q52,5.6 50,5.6 H44.4Z" fill="#000"/></g></svg>
<svg style="left:985px;top:507.2px;overflow:hidden" width="49.4" height="57.8" viewBox="0 0 60 70" preserveAspectRatio="none"><path d="M29.7,7.4 C21,7.4 15.8,11.4 15.2,17.4 C14.4,24 13,30 11.5,34.4 C10,40 8.6,44 6.6,47.4 C4.6,50.6 1.6,54 0.3,58.8 L59.1,58.8 C57.8,54 54.8,50.6 52.8,47.4 C50.8,44 49.4,40 47.9,34.4 C46.4,30 45,24 44.2,17.4 C43.6,11.4 38.4,7.4 29.7,7.4Z" fill="#000"/><path fill-rule="evenodd" d="M21.7,6.6 A8,6.6 0 1 0 37.7,6.6 A8,6.6 0 1 0 21.7,6.6Z M25.9,6.1 A3.8,2.9 0 1 1 33.5,6.1 A3.8,2.9 0 1 1 25.9,6.1Z" fill="#000"/><ellipse cx="29.7" cy="58.9" rx="29.6" ry="10.7" fill="#000"/><ellipse cx="29.5" cy="59" rx="24.8" ry="6.4" fill="#fff"/><path d="M24.9,50 H34.5 V54.8 A4.8,4.8 0 0 1 24.9,54.8Z" fill="#000"/></svg>
<svg style="left:1073px;top:507.6px;overflow:hidden" width="55.8" height="58" viewBox="0 0 68 71" preserveAspectRatio="none"><rect x="2.2" y="7.6" width="49.6" height="60.8" rx="2.6" fill="#fff" stroke="#000" stroke-width="4.4"/><path d="M18.8,6.4 V3 Q18.8,0 21.8,0 H33 Q36,0 36,3 V6.4 H40.4 V15.6 H14.8 V6.4Z" fill="#000"/><circle cx="27.4" cy="5.4" r="2.5" fill="#fff"/><path d="M10.4,27.2 H40 M10.4,38 H32.4 M10.4,48.6 H25.4" stroke="#000" stroke-width="3.6" fill="none"/><g transform="translate(28.2 49.8) rotate(-45)"><path d="M-2.4,0 L9,-7.8 H49.4 Q54.4,-7.8 54.4,-2.8 V2.8 Q54.4,7.8 49.4,7.8 H9Z" fill="#fff"/><path d="M0.4,0 L10,-5.4 V5.4Z" fill="#fff" stroke="#000" stroke-width="1.8" stroke-linejoin="round"/><path d="M0.4,0 L4.4,-2.2 V2.2Z" fill="#000"/><path d="M10.4,-5.6 H42 V5.6 H10.4Z" fill="#000"/><path d="M44.4,-5.6 H50 Q52,-5.6 52,-3.6 V3.6 Q52,5.6 50,5.6 H44.4Z" fill="#000"/></g></svg>
<svg style="left:1162px;top:507.6px;overflow:hidden" width="55.8" height="58" viewBox="0 0 68 71" preserveAspectRatio="none"><rect x="2.2" y="7.6" width="49.6" height="60.8" rx="2.6" fill="#fff" stroke="#000" stroke-width="4.4"/><path d="M18.8,6.4 V3 Q18.8,0 21.8,0 H33 Q36,0 36,3 V6.4 H40.4 V15.6 H14.8 V6.4Z" fill="#000"/><circle cx="27.4" cy="5.4" r="2.5" fill="#fff"/><path d="M10.4,27.2 H40 M10.4,38 H32.4 M10.4,48.6 H25.4" stroke="#000" stroke-width="3.6" fill="none"/><g transform="translate(28.2 49.8) rotate(-45)"><path d="M-2.4,0 L9,-7.8 H49.4 Q54.4,-7.8 54.4,-2.8 V2.8 Q54.4,7.8 49.4,7.8 H9Z" fill="#fff"/><path d="M0.4,0 L10,-5.4 V5.4Z" fill="#fff" stroke="#000" stroke-width="1.8" stroke-linejoin="round"/><path d="M0.4,0 L4.4,-2.2 V2.2Z" fill="#000"/><path d="M10.4,-5.6 H42 V5.6 H10.4Z" fill="#000"/><path d="M44.4,-5.6 H50 Q52,-5.6 52,-3.6 V3.6 Q52,5.6 50,5.6 H44.4Z" fill="#000"/></g></svg>
<!-- sec_gallery -->
<div style="left:356.2px;top:164.8px;width:320.8px;height:510px;background:#bfbfbf;border:1px solid #5e5e5e;border-right-color:#8e8e8e;border-radius:4px 4px 0 0;box-sizing:border-box;"></div>
<div style="left:657px;top:165.8px;width:19px;height:505px;background:#d6d6d6;border-radius:0 3px 0 0;"></div>
<svg style="left:660.7px;top:170.6px;" width="12" height="8" viewBox="0 0 12 8"><path d="M1.4 7.4 L6 1.2 L10.6 7.4Z" fill="#4a4a4a"/></svg>
<div style="left:662.8px;top:184px;width:8px;height:379.5px;background:#4e4e4e;"></div>
<span style="left:370.50px;top:173.44px;font-size:12px;line-height:16px;color:#262626;letter-spacing:0.000px;transform:scaleX(1.0061);transform-origin:0 50%;font-weight:700;">Recently Used Shapes</span>
<span style="left:370.50px;top:264.04px;font-size:12px;line-height:16px;color:#262626;letter-spacing:0.000px;transform:scaleX(0.9891);transform-origin:0 50%;font-weight:700;">Lines</span>
<span style="left:370.50px;top:329.14px;font-size:12px;line-height:16px;color:#262626;letter-spacing:0.000px;transform:scaleX(1.0152);transform-origin:0 50%;font-weight:700;">Rectangles</span>
<span style="left:370.50px;top:394.44px;font-size:12px;line-height:16px;color:#262626;letter-spacing:0.000px;transform:scaleX(0.9803);transform-origin:0 50%;font-weight:700;">Basic Shapes</span>
<span style="left:370.50px;top:534.64px;font-size:12px;line-height:16px;color:#262626;letter-spacing:0.000px;transform:scaleX(1.0207);transform-origin:0 50%;font-weight:700;">Block Arrows</span>
<span style="left:370.50px;top:650.14px;font-size:12px;line-height:16px;color:#262626;letter-spacing:0.000px;transform:scaleX(1.0118);transform-origin:0 50%;font-weight:700;">Equation Shapes</span>
<div style="left:357px;top:255px;width:300.5px;height:1px;background:#a4a4a4;"></div>
<div style="left:357px;top:386px;width:300.5px;height:1px;background:#a4a4a4;"></div>
<div style="left:357px;top:526.5px;width:300.5px;height:1px;background:#a4a4a4;"></div>
<div style="left:357px;top:641.5px;width:300.5px;height:1px;background:#a4a4a4;"></div>
<svg style="left:0;top:0" width="1200" height="675" viewBox="0 0 1200 675"><g stroke="#4c4c4c" stroke-width="1.25" stroke-linejoin="round" stroke-linecap="round"><g transform="translate(369.50 208.6)"><rect x="-7.6" y="-6.4" width="15.2" height="12.8" fill="#e9eff6" stroke="#8a8078" stroke-width="1"/><text x="0" y="3.2" font-size="9" font-weight="bold" text-anchor="middle" fill="#2266ae" stroke="#2266ae" stroke-width="0.35" font-family="Liberation Sans,sans-serif" transform="rotate(0)">A</text><circle cx="-7.6" cy="-6.4" r="1.4" fill="#2266ae" stroke="none"/><circle cx="-7.6" cy="6.4" r="1.4" fill="#2266ae" stroke="none"/><circle cx="7.6" cy="-6.4" r="1.4" fill="#2266ae" stroke="none"/><circle cx="7.6" cy="6.4" r="1.4" fill="#2266ae" stroke="none"/></g><g transform="translate(394.55 208.6)"><rect x="-7.6" y="-6.4" width="15.2" height="12.8" fill="#e9eff6" stroke="#8a8078" stroke-width="1"/><text x="0" y="3.2" font-size="9" font-weight="bold" text-anchor="middle" fill="#2266ae" stroke="#2266ae" stroke-width="0.35" font-family="Liberation Sans,sans-serif" transform="rotate(90)">A</text><circle cx="-7.6" cy="-6.4" r="1.4" fill="#2266ae" stroke="none"/><circle cx="-7.6" cy="6.4" r="1.4" fill="#2266ae" stroke="none"/><circle cx="7.6" cy="-6.4" r="1.4" fill="#2266ae" stroke="none"/><circle cx="7.6" cy="6.4" r="1.4" fill="#2266ae" stroke="none"/></g><g transform="translate(419.60 208.6)"><path d="M-8,-8 L8,8" fill="none" /></g><g transform="translate(444.65 208.6)"><path d="M-8,-8 L8,8 M3.2,7.2 L8,8 L7.2,3.2" fill="none" /></g><g transform="translate(469.70 208.6)"><path d="M-8,-5.8H8V5.8H-8Z" fill="#e7e7e7" /></g><g transform="translate(494.75 208.6)"><ellipse cx="0" cy="0" rx="8" ry="5.8" fill="#e7e7e7"/></g><g transform="translate(519.80 208.6)"><rect x="-8" y="-5.8" width="16" height="11.6" rx="2.6" fill="#e7e7e7"/></g><g transform="translate(544.85 208.6)"><path d="M0,-7.6 L8,7.6 H-8Z" fill="#e7e7e7" /></g><g transform="translate(569.90 208.6)"><path d="M-8,-6.8 H0.5 V6.6 H8.5" fill="none" /></g><g transform="translate(594.95 208.6)"><path d="M-8,-6 H0 V5.6 H7.4 M4.6,2.8 L7.6,5.6 L4.6,8.4" fill="none" /></g><g transform="translate(620.00 208.6)"><path d="M-8,-3 H0.4 V-6.4 L8,0 L0.4,6.4 V3 H-8Z" fill="#e7e7e7" /></g><g transform="translate(645.05 208.6)"><path d="M-3,-8 H3 V0.4 H6.4 L0,8 L-6.4,0.4 H-3Z" fill="#e7e7e7" /></g><g transform="translate(369.50 233.3)"><path d="M-7.6,5.4 V-3.4 Q-7.6,-7 -3.8,-7 H3.6 C2.4,-3.6 3.8,-2 6,-1.8 Q8,-1.4 8,1 V5.4 Q8,7 6.4,7 H-6 Q-7.6,7 -7.6,5.4Z" fill="#e7e7e7" /></g><g transform="translate(394.55 233.3)"><path d="M-6.2,-7.4 C-9.2,-1.5 -5.5,4.8 -1,4 C4,3 8,-3.5 4.6,-5.8 C1,-8 -4.2,-2 -3,2.6 C-1.8,7 3.4,2.6 6,5 C7.6,6.6 5.6,8.2 4.4,7.8" fill="none" /></g><g transform="translate(419.60 233.3)"><path d="M-8,-7.4 Q6,-7.2 8,7.6" fill="none" /></g><g transform="translate(444.65 233.3)"><path d="M-8,-1.6 C-6,-6.6 -3,-8.4 -0.8,-3 C1.2,2 3,7.4 8,6.6" fill="none" /></g><g transform="translate(469.70 233.3)"><path d="M2.2,-7.6 Q-0.3,-7.6 -0.3,-5.2 V-2.2 Q-0.3,0 -2.6,0 Q-0.3,0 -0.3,2.2 V5.2 Q-0.3,7.6 2.2,7.6" fill="none" /></g><g transform="translate(494.75 233.3)"><path d="M-2.2,-7.6 Q0.3,-7.6 0.3,-5.2 V-2.2 Q0.3,0 2.6,0 Q0.3,0 0.3,2.2 V5.2 Q0.3,7.6 -2.2,7.6" fill="none" /></g><g transform="translate(369.50 298.6)"><path d="M-8,-8 L8,8" fill="none" /></g><g transform="translate(394.55 298.6)"><path d="M-8,-8 L8,8 M3.2,7.2 L8,8 L7.2,3.2" fill="none" /></g><g transform="translate(419.60 298.6)"><path d="M-8,-8 L8,8 M3.2,7.2 L8,8 L7.2,3.2 M-3.2,-7.2 L-8,-8 L-7.2,-3.2" fill="none" /></g><g transform="translate(444.65 298.6)"><path d="M-8,-6.8 H0.5 V6.6 H8.5" fill="none" /></g><g transform="translate(469.70 298.6)"><path d="M-8,-6 H0 V5.6 H7.4 M4.6,2.8 L7.6,5.6 L4.6,8.4" fill="none" /></g><g transform="translate(494.75 298.6)"><path d="M-7.4,-6 H0 V5.6 H7.4 M4.6,2.8 L7.6,5.6 L4.6,8.4 M-4.6,-8.8 L-7.6,-6 L-4.6,-3.2" fill="none" /></g><g transform="translate(519.80 298.6)"><path d="M-4.6,-6.4 H-0.5 Q4,-6.4 4,-3.4 Q4,-0.2 0,0 Q-4.2,0.4 -4,3.4 Q-3.8,6.4 0.4,6.4 H5" fill="none" /></g><g transform="translate(544.85 298.6)"><path d="M-4.6,-6.4 H-0.5 Q4,-6.4 4,-3.4 Q4,-0.2 0,0 Q-4.2,0.4 -4,3 Q-3.8,5.6 0.4,5.6 H4.6 M2.2,3 L5,5.6 L2.2,8.2" fill="none" /></g><g transform="translate(569.90 298.6)"><path d="M-3.6,-6 H-0.5 Q4,-6 4,-3.2 Q4,-0.2 0,0 Q-4.2,0.4 -4,3 Q-3.8,5.6 0.4,5.6 H4.6 M2.2,3 L5,5.6 L2.2,8.2 M-1.6,-8.6 L-4.4,-6 L-1.6,-3.4" fill="none" /></g><g transform="translate(594.95 298.6)"><path d="M-8,-1.6 C-6,-6.6 -3,-8.4 -0.8,-3 C1.2,2 3,7.4 8,6.6" fill="none" /></g><g transform="translate(620.00 298.6)"><path d="M-7.6,5.4 V-3.4 Q-7.6,-7 -3.8,-7 H3.6 C2.4,-3.6 3.8,-2 6,-1.8 Q8,-1.4 8,1 V5.4 Q8,7 6.4,7 H-6 Q-7.6,7 -7.6,5.4Z" fill="#e7e7e7" /></g><g transform="translate(645.05 298.6)"><path d="M-6.2,-7.4 C-9.2,-1.5 -5.5,4.8 -1,4 C4,3 8,-3.5 4.6,-5.8 C1,-8 -4.2,-2 -3,2.6 C-1.8,7 3.4,2.6 6,5 C7.6,6.6 5.6,8.2 4.4,7.8" fill="none" /></g><g transform="translate(369.50 364.2)"><path d="M-8,-5.8H8V5.8H-8Z" fill="#e7e7e7" /></g><g transform="translate(394.55 364.2)"><rect x="-8" y="-5.8" width="16" height="11.6" rx="2.6" fill="#e7e7e7"/></g><g transform="translate(419.60 364.2)"><path d="M-8,-5.8 H3.6 L8,-1.4 V5.8 H-8Z" fill="#e7e7e7" /></g><g transform="translate(444.65 364.2)"><path d="M-3.6,-5.8 H3.6 L8,-1.4 V5.8 H-8 V-1.4Z" fill="#e7e7e7" /></g><g transform="translate(469.70 364.2)"><path d="M-8,-5.8 H3.6 L8,-1.4 V5.8 H-3.6 L-8,1.4Z" fill="#e7e7e7" /></g><g transform="translate(494.75 364.2)"><path d="M-4.6,-5.8 H3.6 L8,-1.4 V5.8 H-8 V-2.4 Q-8,-5.8 -4.6,-5.8Z" fill="#e7e7e7" /></g><g transform="translate(519.80 364.2)"><path d="M-8,-5.8 H4.6 Q8,-5.8 8,-2.4 V5.8 H-8Z" fill="#e7e7e7" /></g><g transform="translate(544.85 364.2)"><path d="M-5,-5.8 H5 Q8,-5.8 8,-2.8 V5.8 H-8 V-2.8 Q-8,-5.8 -5,-5.8Z" fill="#e7e7e7" /></g><g transform="translate(569.90 364.2)"><path d="M-5,-5.8 H8 V2.8 Q8,5.8 5,5.8 H-8 V-2.8 Q-8,-5.8 -5,-5.8Z" fill="#e7e7e7" /></g><g transform="translate(369.50 429.4)"><rect x="-7.6" y="-6.4" width="15.2" height="12.8" fill="#e9eff6" stroke="#8a8078" stroke-width="1"/><text x="0" y="3.2" font-size="9" font-weight="bold" text-anchor="middle" fill="#2266ae" stroke="#2266ae" stroke-width="0.35" font-family="Liberation Sans,sans-serif" transform="rotate(0)">A</text><circle cx="-7.6" cy="-6.4" r="1.4" fill="#2266ae" stroke="none"/><circle cx="-7.6" cy="6.4" r="1.4" fill="#2266ae" stroke="none"/><circle cx="7.6" cy="-6.4" r="1.4" fill="#2266ae" stroke="none"/><circle cx="7.6" cy="6.4" r="1.4" fill="#2266ae" stroke="none"/></g><g transform="translate(394.55 429.4)"><rect x="-7.6" y="-6.4" width="15.2" height="12.8" fill="#e9eff6" stroke="#8a8078" stroke-width="1"/><text x="0" y="3.2" font-size="9" font-weight="bold" text-anchor="middle" fill="#2266ae" stroke="#2266ae" stroke-width="0.35" font-family="Liberation Sans,sans-serif" transform="rotate(90)">A</text><circle cx="-7.6" cy="-6.4" r="1.4" fill="#2266ae" stroke="none"/><circle cx="-7.6" cy="6.4" r="1.4" fill="#2266ae" stroke="none"/><circle cx="7.6" cy="-6.4" r="1.4" fill="#2266ae" stroke="none"/><circle cx="7.6" cy="6.4" r="1.4" fill="#2266ae" stroke="none"/></g><g transform="translate(419.60 429.4)"><ellipse cx="0" cy="0" rx="8" ry="5.8" fill="#e7e7e7"/></g><g transform="translate(444.65 429.4)"><path d="M0,-7.6 L8,7.6 H-8Z" fill="#e7e7e7" /></g><g transform="translate(469.70 429.4)"><path d="M-7.6,-7.6 L8,7.6 H-7.6Z" fill="#e7e7e7" /></g><g transform="translate(494.75 429.4)"><path d="M-3.6,-7 H8 L3.6,7 H-8Z" fill="#e7e7e7" /></g><g transform="translate(519.80 429.4)"><path d="M-3.8,-6.4 H3.8 L7.2,6.4 H-7.2Z" fill="#e7e7e7" /></g><g transform="translate(544.85 429.4)"><path d="M0,-7.8 L8,0 L0,7.8 L-8,0Z" fill="#e7e7e7" /></g><g transform="translate(569.90 429.4)"><path d="M0.00,-7.60 L7.80,-1.93 L4.82,7.23 L-4.82,7.23 L-7.80,-1.93Z" fill="#e7e7e7" /></g><g transform="translate(594.95 429.4)"><path d="M8.00,0.00 L4.00,6.58 L-4.00,6.58 L-8.00,0.00 L-4.00,-6.58 L4.00,-6.58Z" fill="#e7e7e7" /></g><g transform="translate(620.00 429.4)"><path d="M0.00,-7.70 L6.25,-4.69 L7.80,2.08 L3.47,7.51 L-3.47,7.51 L-7.80,2.08 L-6.25,-4.69Z" fill="#e7e7e7" /><text x="0" y="2.7" font-size="7.6" text-anchor="middle" fill="#7a7a7a" stroke="none" font-family="Liberation Sans,sans-serif">7</text></g><g transform="translate(645.05 429.4)"><path d="M7.67,3.18 L3.18,7.67 L-3.18,7.67 L-7.67,3.18 L-7.67,-3.18 L-3.18,-7.67 L3.18,-7.67 L7.67,-3.18Z" fill="#e7e7e7" /><text x="0" y="2.7" font-size="7.6" text-anchor="middle" fill="#7a7a7a" stroke="none" font-family="Liberation Sans,sans-serif">8</text></g><g transform="translate(369.50 454.6)"><path d="M8.20,0.00 L6.63,4.82 L2.53,7.80 L-2.53,7.80 L-6.63,4.82 L-8.20,0.00 L-6.63,-4.82 L-2.53,-7.80 L2.53,-7.80 L6.63,-4.82Z" fill="#e7e7e7" /><text x="0" y="2.7" font-size="7.6" text-anchor="middle" fill="#7a7a7a" stroke="none" font-family="Liberation Sans,sans-serif">10</text></g><g transform="translate(394.55 454.6)"><path d="M7.92,2.12 L5.80,5.80 L2.12,7.92 L-2.12,7.92 L-5.80,5.80 L-7.92,2.12 L-7.92,-2.12 L-5.80,-5.80 L-2.12,-7.92 L2.12,-7.92 L5.80,-5.80 L7.92,-2.12Z" fill="#e7e7e7" /><text x="0" y="2.7" font-size="7.6" text-anchor="middle" fill="#7a7a7a" stroke="none" font-family="Liberation Sans,sans-serif">12</text></g><g transform="translate(419.60 454.6)"><path d="M0,0 H8 A8,8 0 1 1 0,-8Z" fill="#e7e7e7" /></g><g transform="translate(444.65 454.6)"><path d="M1.4,-7.9 A8,8 0 1 0 7.9,1.4Z" fill="#e7e7e7" /></g><g transform="translate(469.70 454.6)"><path d="M8,-8 V0 A8,8 0 1 1 0,-8Z" fill="#e7e7e7" /></g><g transform="translate(494.75 454.6)"><path d="M-8,-7.6H8V7.6H-8Z" fill="#e7e7e7" /><path d="M-4.8,-4.4H4.8V4.4H-4.8Z" fill="#d4d4d4" /></g><g transform="translate(519.80 454.6)"><path d="M-7.6,-7.6 H8 L5.6,-4.6 H-4.6 V4.8 L-7.6,7.8Z" fill="#e7e7e7" /></g><g transform="translate(544.85 454.6)"><path d="M-7.6,-7.6 H-2.2 V2.4 H7.8 V7.6 H-7.6Z" fill="#e7e7e7" /></g><g transform="translate(569.90 454.6)"><path d="M-7.6,7.6 V1.2 L1.6,-7.6 H7.8Z" fill="#e7e7e7" /></g><g transform="translate(594.95 454.6)"><path d="M-2.6,-7.8 H2.6 V-2.6 H7.8 V2.6 H2.6 V7.8 H-2.6 V2.6 H-7.8 V-2.6 H-2.6Z" fill="#e7e7e7" /></g><g transform="translate(620.00 454.6)"><path d="M-4.6,-7.8 H4.6 A3.2,3.2 0 0 0 7.8,-4.6 V4.6 A3.2,3.2 0 0 0 4.6,7.8 H-4.6 A3.2,3.2 0 0 0 -7.8,4.6 V-4.6 A3.2,3.2 0 0 0 -4.6,-7.8Z" fill="#e7e7e7" /></g><g transform="translate(645.05 454.6)"><path d="M-6,-5.6 V5.6 A6,2.2 0 0 0 6,5.6 V-5.6 A6,2.2 0 0 0 -6,-5.6 A6,2.2 0 0 0 6,-5.6" fill="#e7e7e7" /></g><g transform="translate(369.50 479.6)"><path d="M-7.8,-3.6 L-3.6,-7.8 H7.8 V3.6 L3.6,7.8 H-7.8Z" fill="#e7e7e7" /><path d="M-7.8,-3.6 H3.6 V7.8 M3.6,-3.6 L7.8,-7.8" fill="none" /></g><g transform="translate(394.55 479.6)"><path d="M-7.8,-7.6H7.8V7.6H-7.8Z" fill="#e7e7e7" /><path d="M-4.6,-4.4H4.6V4.4H-4.6Z M-7.8,-7.6 L-4.6,-4.4 M7.8,-7.6 L4.6,-4.4 M7.8,7.6 L4.6,4.4 M-7.8,7.6 L-4.6,4.4" fill="none" /></g><g transform="translate(419.60 479.6)"><circle r="8" fill="#e7e7e7"/><circle r="3.6" fill="#d0d0d0"/></g><g transform="translate(444.65 479.6)"><circle r="8" fill="#e7e7e7"/><circle r="5.3" fill="#cdcdcd"/><g transform="rotate(45)"><rect x="-5.4" y="-1.6" width="10.8" height="3.2" fill="#e7e7e7" stroke="none"/><path d="M-5,-1.6H5 M-5,1.6H5" fill="none"/></g></g><g transform="translate(469.70 479.6)"><path d="M-8,4 A8,8 0 0 1 8,4 H4 A4,4 0 0 0 -4,4Z" fill="#e7e7e7" /></g><g transform="translate(494.75 479.6)"><path d="M-7.8,-7.6 H7.8 V3.4 L3.6,7.6 H-7.8Z" fill="#e7e7e7" /><path d="M7.8,3.4 L4.4,4.2 L3.6,7.6" fill="none" /></g><g transform="translate(519.80 479.6)"><circle r="8" fill="#e7e7e7"/><circle cx="-2.8" cy="-2.4" r="0.9" fill="#555" stroke="none"/><circle cx="2.8" cy="-2.4" r="0.9" fill="#555" stroke="none"/><path d="M-4.4,2 Q0,6.6 4.4,2" fill="none" /></g><g transform="translate(544.85 479.6)"><path d="M0,7.4 C-3,4.6 -8.2,1.4 -8.2,-3 C-8.2,-8 -1.6,-8.6 0,-4.2 C1.6,-8.6 8.2,-8 8.2,-3 C8.2,1.4 3,4.6 0,7.4Z" fill="#e7e7e7" /></g><g transform="translate(569.90 479.6)"><path d="M-1.2,-8 L-5.8,-4.6 L-1.4,-1.8 L-3.6,-0.4 L4.8,8.2 L2,1.6 L4,0.6 L0.4,-2.6 L2.4,-3.6Z" fill="#e7e7e7" /></g><g transform="translate(594.95 479.6)"><circle r="4.1" fill="#e7e7e7"/><path d="M7.90,0.00 L5.94,1.37 L5.94,-1.37Z" fill="#777" stroke-width="0.5"/><path d="M5.59,5.59 L3.23,5.17 L5.17,3.23Z" fill="#777" stroke-width="0.5"/><path d="M0.00,7.90 L-1.37,5.94 L1.37,5.94Z" fill="#777" stroke-width="0.5"/><path d="M-5.59,5.59 L-5.17,3.23 L-3.23,5.17Z" fill="#777" stroke-width="0.5"/><path d="M-7.90,0.00 L-5.94,-1.37 L-5.94,1.37Z" fill="#777" stroke-width="0.5"/><path d="M-5.59,-5.59 L-3.23,-5.17 L-5.17,-3.23Z" fill="#777" stroke-width="0.5"/><path d="M-0.00,-7.90 L1.37,-5.94 L-1.37,-5.94Z" fill="#777" stroke-width="0.5"/><path d="M5.59,-5.59 L5.17,-3.23 L3.23,-5.17Z" fill="#777" stroke-width="0.5"/></g><g transform="translate(620.00 479.6)"><path d="M5,-8 C-1,-8 -5.8,-4.4 -5.8,0 C-5.8,4.4 -1,8 5,8 C1.4,5.4 -0.2,3 -0.2,0 C-0.2,-3 1.4,-5.4 5,-8Z" fill="#e7e7e7" /></g><g transform="translate(645.05 479.6)"><path d="M-5.4,4.8 C-9,4.8 -9,0.4 -6.4,-0.6 C-8,-4.6 -3.6,-6.6 -2,-4.8 C-0.6,-8 4.4,-7.6 4.6,-4.6 C8.2,-5.4 9.4,-1 7,0.6 C9.4,2.6 7.6,6.2 4.4,5 C3.6,8 -0.4,8 -1.2,5.8 C-2.6,7.8 -5.6,7 -5.4,4.8Z" fill="#e7e7e7" /></g><g transform="translate(369.50 504.5)"><path d="M-8,-7.4 Q6,-7.2 8,7.6" fill="none" /></g><g transform="translate(394.55 504.5)"><g transform="translate(-6.3 0)"><path d="M2.5,-7.5 H0.5 Q-1.8,-7.5 -1.8,-5.2 V5.2 Q-1.8,7.5 0.5,7.5 H2.5" fill="none" /></g><g transform="translate(6.3 0)"><path d="M-2.5,-7.5 H-0.5 Q1.8,-7.5 1.8,-5.2 V5.2 Q1.8,7.5 -0.5,7.5 H-2.5" fill="none" /></g></g><g transform="translate(419.60 504.5)"><g transform="translate(-5 0)"><path d="M2.2,-7.6 Q-0.3,-7.6 -0.3,-5.2 V-2.2 Q-0.3,0 -2.6,0 Q-0.3,0 -0.3,2.2 V5.2 Q-0.3,7.6 2.2,7.6" fill="none" /></g><g transform="translate(5 0)"><path d="M-2.2,-7.6 Q0.3,-7.6 0.3,-5.2 V-2.2 Q0.3,0 2.6,0 Q0.3,0 0.3,2.2 V5.2 Q0.3,7.6 -2.2,7.6" fill="none" /></g></g><g transform="translate(444.65 504.5)"><path d="M2.5,-7.5 H0.5 Q-1.8,-7.5 -1.8,-5.2 V5.2 Q-1.8,7.5 0.5,7.5 H2.5" fill="none" /></g><g transform="translate(469.70 504.5)"><path d="M-2.5,-7.5 H-0.5 Q1.8,-7.5 1.8,-5.2 V5.2 Q1.8,7.5 -0.5,7.5 H-2.5" fill="none" /></g><g transform="translate(494.75 504.5)"><path d="M2.2,-7.6 Q-0.3,-7.6 -0.3,-5.2 V-2.2 Q-0.3,0 -2.6,0 Q-0.3,0 -0.3,2.2 V5.2 Q-0.3,7.6 2.2,7.6" fill="none" /></g><g transform="translate(519.80 504.5)"><path d="M-2.2,-7.6 Q0.3,-7.6 0.3,-5.2 V-2.2 Q0.3,0 2.6,0 Q0.3,0 0.3,2.2 V5.2 Q0.3,7.6 -2.2,7.6" fill="none" /></g><g transform="translate(369.50 570.5)"><path d="M-8,-3 H0.4 V-6.4 L8,0 L0.4,6.4 V3 H-8Z" fill="#e7e7e7" /></g><g transform="translate(394.55 570.5)"><path d="M8,-3 H-0.4 V-6.4 L-8,0 L-0.4,6.4 V3 H8Z" fill="#e7e7e7" /></g><g transform="translate(419.60 570.5)"><path d="M-3,8 H3 V-0.4 H6.4 L0,-8 L-6.4,-0.4 H-3Z" fill="#e7e7e7" /></g><g transform="translate(444.65 570.5)"><path d="M-3,-8 H3 V0.4 H6.4 L0,8 L-6.4,0.4 H-3Z" fill="#e7e7e7" /></g><g transform="translate(469.70 570.5)"><path d="M-8,0 L-3.6,-4.4 V-2.2 H3.6 V-4.4 L8,0 L3.6,4.4 V2.2 H-3.6 V4.4Z" fill="#e7e7e7" /></g><g transform="translate(494.75 570.5)"><path d="M0,-8 L4.4,-3.6 H2.2 V3.6 H4.4 L0,8 L-4.4,3.6 H-2.2 V-3.6 H-4.4Z" fill="#e7e7e7" /></g><g transform="translate(519.80 570.5)"><path d="M0,-8 L3.2,-4.8 H1.4 V-1.4 H4.8 V-3.2 L8,0 L4.8,3.2 V1.4 H1.4 V4.8 H3.2 L0,8 L-3.2,4.8 H-1.4 V1.4 H-4.8 V3.2 L-8,0 L-4.8,-3.2 V-1.4 H-1.4 V-4.8 H-3.2Z" fill="#e7e7e7" /></g><g transform="translate(544.85 570.5)"><path d="M0,-6.6 L3.2,-3.4 H1.4 V2 H4.8 V0.2 L8,3.4 L4.8,6.6 V4.8 H-4.8 V6.6 L-8,3.4 L-4.8,0.2 V2 H-1.4 V-3.4 H-3.2Z" fill="#e7e7e7" /></g><g transform="translate(569.90 570.5)"><path d="M-7.4,7.8 V-0.6 Q-7.4,-5.4 -2.6,-5.4 H3.4 V-7.8 L8,-4 L3.4,-0.2 V-2.6 H-2.4 Q-4.6,-2.6 -4.6,-0.4 V7.8Z" fill="#e7e7e7" /></g><g transform="translate(594.95 570.5)"><path d="M-7.4,7.8 V-1 A7,7 0 0 1 6.6,-1 V1.4 H9 L5.2,6 L1.4,1.4 H3.8 V-1 A4.2,4.2 0 0 0 -4.6,-1 V7.8Z" fill="#e7e7e7" /></g><g transform="translate(620.00 570.5)"><path d="M-8,3.8 L-4,-0.2 V2.4 H2.8 V-3.8 H0.2 L4.2,-8 L8.2,-3.8 H5.6 V5.2 H-4 V7.8Z" fill="#e7e7e7" /></g><g transform="translate(645.05 570.5)"><path d="M-7.6,4.6 H3 V-3.8 H0.4 L4.4,-8 L8.4,-3.8 H5.8 V7.6 H-7.6Z" fill="#e7e7e7" /></g><g transform="translate(369.50 595.5)"><g transform="translate(0 0) scale(0.84 0.9)" stroke-width="1.44"><path d="M3.6,-7.6 C-5.6,-7.6 -8,-2 -8,0.4 C-8,3.6 -3.4,6.4 2.4,6.4 V8.4 L7.6,4.4 L2.4,0.6 V2.8 C-2,2.8 -5.6,1.4 -6.6,-1 C-5,-4.6 -1,-5.6 3.6,-5.6Z" fill="#e7e7e7" /><path d="M-8,0.4 C-7.8,-1.2 -7.2,-2 -6.6,-1" fill="none" /></g></g><g transform="translate(394.55 595.5)"><g transform="translate(0 0) scale(0.84 0.9)" stroke-width="1.44"><path d="M-3.6,-7.6 C5.6,-7.6 8,-2 8,0.4 C8,3.6 3.4,6.4 -2.4,6.4 V8.4 L-7.6,4.4 L-2.4,0.6 V2.8 C2,2.8 5.6,1.4 6.6,-1 C5,-4.6 1,-5.6 -3.6,-5.6Z" fill="#e7e7e7" /><path d="M8,0.4 C7.8,-1.2 7.2,-2 6.6,-1" fill="none" /></g></g><g transform="translate(419.60 595.5)"><g transform="translate(0 -0.6) scale(0.96 0.8)" stroke-width="1.42"><path d="M-7.6,-3.6 C-7.6,5.6 -2,8 0.4,8 C3.6,8 6.4,3.4 6.4,-2.4 H8.4 L4.4,-7.6 L0.6,-2.4 H2.8 C2.8,2 1.4,5.6 -1,6.6 C-4.6,5 -5.6,1 -5.6,-3.6Z" fill="#e7e7e7" /><path d="M0.4,8 C-1.2,7.8 -2,7.2 -1,6.6" fill="none" /></g></g><g transform="translate(444.65 595.5)"><g transform="translate(0 -0.6) scale(0.96 0.8)" stroke-width="1.42"><path d="M-7.6,3.6 C-7.6,-5.6 -2,-8 0.4,-8 C3.6,-8 6.4,-3.4 6.4,2.4 H8.4 L4.4,7.6 L0.6,2.4 H2.8 C2.8,-2 1.4,-5.6 -1,-6.6 C-4.6,-5 -5.6,-1 -5.6,3.6Z" fill="#e7e7e7" /><path d="M0.4,-8 C-1.2,-7.8 -2,-7.2 -1,-6.6" fill="none" /></g></g><g transform="translate(469.70 595.5)"><path d="M-3.4,-3 H1.4 V-6.4 L8,0 L1.4,6.4 V3 H-3.4Z" fill="#e7e7e7" /><path d="M-8,-3V3 M-6.6,-3V3 M-5.2,-3V3" fill="none" stroke-width="0.9"/></g><g transform="translate(494.75 595.5)"><path d="M-8,-3 H1 V-6.4 L8,0 L1,6.4 V3 H-8 L-4.6,0Z" fill="#e7e7e7" /></g><g transform="translate(519.80 595.5)"><path d="M-7.6,-6.4 H2.4 L8,0 L2.4,6.4 H-7.6Z" fill="#e7e7e7" /></g><g transform="translate(544.85 595.5)"><path d="M-7.6,-6.4 H2 L8,0 L2,6.4 H-7.6 L-1.8,0Z" fill="#e7e7e7" /></g><g transform="translate(569.90 595.5)"><path d="M-7.8,-7.6 H2 V-2 H4 V-4 L8.2,0 L4,4 V2 H2 V7.6 H-7.8Z" fill="#e7e7e7" /></g><g transform="translate(594.95 595.5)"><path d="M-7.6,-7.8 H7.6 V1.6 H2 V3.6 H4 L0,8 L-4,3.6 H-2 V1.6 H-7.6Z" fill="#e7e7e7" /></g><g transform="translate(620.00 595.5)"><path d="M7.8,-7.6 H-2 V-2 H-4 V-4 L-8.2,0 L-4,4 V2 H-2 V7.6 H7.8Z" fill="#e7e7e7" /></g><g transform="translate(645.05 595.5)"><path d="M-7.6,7.8 H7.6 V-1.6 H2 V-3.6 H4 L0,-8 L-4,-3.6 H-2 V-1.6 H-7.6Z" fill="#e7e7e7" /></g><g transform="translate(369.50 620.6)"><path d="M-3.6,-7.8 H3.6 V-1.8 H5 V-3.6 L8,0 L5,3.6 V1.8 H3.6 V7.8 H-3.6 V1.8 H-5 V3.6 L-8,0 L-5,-3.6 V-1.8 H-3.6Z" fill="#e7e7e7" /></g><g transform="translate(394.55 620.6)"><path d="M0,-8 L2.8,-5.4 H1.2 V-3.6 H3.6 V-1.2 H5.4 V-2.8 L8,0 L5.4,2.8 V1.2 H3.6 V3.6 H1.2 V5.4 H2.8 L0,8 L-2.8,5.4 H-1.2 V3.6 H-3.6 V1.2 H-5.4 V2.8 L-8,0 L-5.4,-2.8 V-1.2 H-3.6 V-3.6 H-1.2 V-5.4 H-2.8Z" fill="#e7e7e7" /></g><g transform="translate(419.60 620.6)"><path d="M-7.4,6 V-0.6 A6.4,6.4 0 0 1 5.4,-0.6 V2 H7.6 L3.6,6.8 L-0.4,2 H2 V-0.6 A3.2,3.2 0 0 0 -4.2,-0.6 V6Z" fill="#e7e7e7" /></g></g></svg>
<!-- sec_annot -->
<svg style="left:0px;top:0px;" width="1200" height="675" viewBox="0 0 1200 675"><rect x="153.05" y="51.75" width="51.70" height="34.70" fill="none" stroke="#fb2f30" stroke-width="3.9"/></svg>
<svg style="left:0px;top:0px;" width="1200" height="675" viewBox="0 0 1200 675"><rect x="350.15" y="271.45" width="304.50" height="50.40" fill="none" stroke="#fb2f30" stroke-width="3.7"/></svg>
<span style="left:218.2px;top:17.2px;font-size:49.5px;line-height:62px;font-weight:700;color:#fb2f30;-webkit-text-stroke:1.1px #fb2f30;transform:scaleX(1.13);transform-origin:left center;">5</span>
<span style="left:300.6px;top:274.2px;font-size:52.5px;line-height:62px;font-weight:700;color:#fb2f30;-webkit-text-stroke:1px #fb2f30;transform:scaleX(1.2);transform-origin:left center;">6</span>
</div></div></div></body></html>
